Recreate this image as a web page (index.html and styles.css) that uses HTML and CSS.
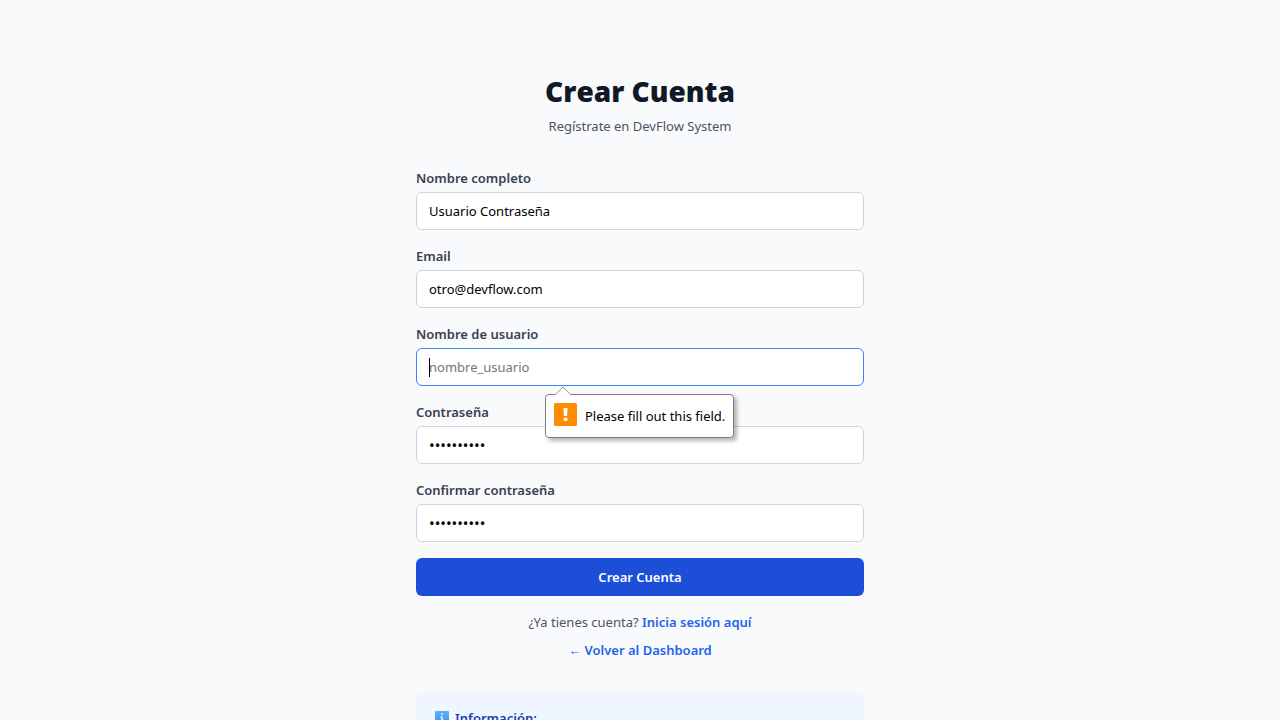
FILE: index.html
```html
<!DOCTYPE html>
<html lang="es">
<head>
  <meta charset="utf-8">
  <meta name="viewport" content="width=device-width, initial-scale=1">
  <title>Crear Cuenta</title>
  <link rel="stylesheet" href="styles.css">
</head>
<body>
  <main class="page">
    <header class="header">
      <h1 class="title">Crear Cuenta</h1>
      <p class="subtitle">Regístrate en DevFlow System</p>
    </header>

    <form class="form" novalidate>
      <div class="field">
        <label class="label" for="name">Nombre completo</label>
        <input class="input" id="name" type="text" value="Usuario Contraseña">
      </div>
      <div class="field">
        <label class="label" for="email">Email</label>
        <input class="input" id="email" type="email" value="otro@devflow.com">
      </div>
      <div class="field">
        <label class="label" for="username">Nombre de usuario</label>
        <div class="control">
          <input class="input input-active" id="username" type="text" placeholder="nombre_usuario" aria-describedby="username-error">
          <span class="caret"></span>
          <div class="bubble" id="username-error" role="alert">
            <svg class="bubble-arrow" viewBox="0 0 18 10" aria-hidden="true">
              <path d="M1 9 L9 1 L17 9 V10 H1z" fill="#fff"/>
              <path d="M1 9 L9 1 L17 9" fill="none" stroke="#999" stroke-width="1"/>
            </svg>
            <svg class="bubble-icon" viewBox="0 0 23 23" aria-hidden="true">
              <rect width="23" height="23" rx="1.500" fill="#ff8c00"/>
              <path d="M9.500 5h4l-.4 8h-3.200z" fill="#fff"/>
              <rect x="9.500" y="14.500" width="4" height="3.500" rx="1.500" fill="#fff"/>
            </svg>
            <span>Please fill out this field.</span>
          </div>
        </div>
      </div>
      <div class="field">
        <label class="label" for="password">Contraseña</label>
        <input class="input input-password" id="password" type="password" value="contrasena">
      </div>
      <div class="field">
        <label class="label" for="confirm">Confirmar contraseña</label>
        <input class="input input-password" id="confirm" type="password" value="contrasena">
      </div>
      <button class="submit" type="submit">Crear Cuenta</button>
    </form>

    <nav class="links">
      <p class="links-row">¿Ya tienes cuenta? <a class="link" href="#">Inicia sesión aquí</a></p>
      <p class="links-row"><a class="link" href="#">← Volver al Dashboard</a></p>
    </nav>

    <section class="info">
      <h2 class="info-title">
        <svg class="info-icon" viewBox="0 0 14 14" aria-hidden="true">
          <defs>
            <linearGradient id="info-fill" x1="0" y1="0" x2="0" y2="1">
              <stop offset="0" stop-color="#5bb0f8"/>
              <stop offset="1" stop-color="#3b92ee"/>
            </linearGradient>
          </defs>
          <rect width="14" height="14" rx="1" fill="url(#info-fill)"/>
          <path d="M6 2.500h2v1.500h-2zM5 5.500h3v5h1v1H5v-1h1v-4H5z" fill="#d5eaff"/>
        </svg>
        Información:
      </h2>
    </section>
  </main>
</body>
</html>
```
FILE: styles.css
```css
* {
  box-sizing: border-box;
}

body {
  margin: 0;
  background: #f9fafb;
  color: #111827;
  font-family: "Segoe UI", "Noto Sans", sans-serif;
  font-size: 13px;
  line-height: 20px;
}

h1,
h2,
p {
  margin: 0;
}

.page {
  max-width: 480px;
  margin: 0 auto;
  padding: 72px 16px 0;
}

.header {
  text-align: center;
}

.title {
  font-family: "Segoe UI", "Open Sans", sans-serif;
  font-size: 28px;
  line-height: 38px;
  font-weight: 800;
}

.subtitle {
  margin-top: 6px;
  color: #4b5563;
}

.form {
  display: flex;
  flex-direction: column;
  gap: 16px;
  margin-top: 32px;
}

.field {
  display: flex;
  flex-direction: column;
  gap: 4px;
}

.label {
  color: #374151;
  font-weight: 600;
}

.control {
  position: relative;
}

.input {
  display: block;
  width: 100%;
  padding: 8px 12px;
  border: 1px solid #d1d5db;
  border-radius: 6px;
  background: #fff;
  color: #000;
  font: inherit;
  height: 38px;
  outline: none;
}

.input::placeholder {
  color: #757575;
  opacity: 1;
}

.input-password {
  font-size: 15px;
}

.input-active {
  border-color: #3b82f6;
}

.caret {
  position: absolute;
  left: 13px;
  top: 10px;
  width: 1px;
  height: 19px;
  background: #000;
}

.bubble {
  position: absolute;
  z-index: 1;
  left: 129px;
  top: 46px;
  display: flex;
  align-items: flex-start;
  gap: 8px;
  padding: 8px;
  border: 1px solid #808080;
  border-radius: 4px;
  background: #fff;
  color: #000;
  line-height: 26px;
  white-space: nowrap;
  box-shadow: 3px 3px 4px rgba(0, 0, 0, 0.3);
}

.bubble-arrow {
  position: absolute;
  left: 8px;
  top: -9px;
  width: 18px;
  height: 10px;
}

.bubble-icon {
  width: 23px;
  height: 23px;
}

.submit {
  height: 38px;
  padding: 8px 16px;
  border: 0;
  border-radius: 6px;
  background: #1d4ed8;
  color: #fff;
  font: inherit;
  font-weight: 600;
  cursor: pointer;
}

.links {
  display: flex;
  flex-direction: column;
  gap: 8px;
  margin-top: 16px;
  text-align: center;
}

.links-row {
  color: #4b5563;
}

.link {
  color: #2563eb;
  font-weight: 600;
  text-decoration: none;
}

.info {
  margin-top: 32px;
  padding: 16px;
  border-radius: 6px;
  background: #eff6ff;
}

.info-title {
  display: flex;
  align-items: center;
  gap: 6px;
  padding-left: 3px;
  color: #1e40af;
  font-size: 13px;
  line-height: 20px;
  font-weight: 600;
}

.info-icon {
  width: 14px;
  height: 14px;
}
```
